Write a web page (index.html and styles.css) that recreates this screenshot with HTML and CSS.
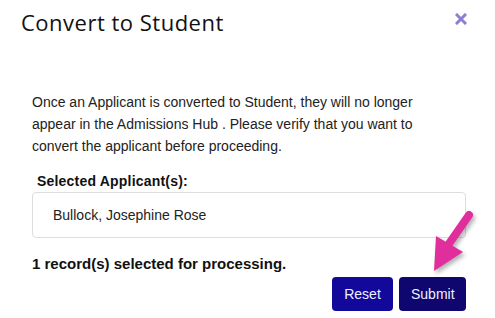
FILE: index.html
```html
<!DOCTYPE html>
<html lang="en">
<head>
    <meta charset="UTF-8">
    <title>Convert to Student</title>
    <link rel="stylesheet" href="styles.css">
</head>
<body>
    <div class="modal">
        <div class="modal-header">
            <h1 class="modal-title">Convert to Student</h1>
            <svg class="modal-close" width="12" height="12" viewBox="0 0 12 12">
                <path d="M2 2 L10 10 M10 2 L2 10" stroke="#8a7fd2" stroke-width="3" stroke-linecap="square"/>
            </svg>
        </div>

        <div class="modal-body">
            <p class="modal-text">Once an Applicant is converted to Student, they will no longer appear in the Admissions Hub . Please verify that you want to convert the applicant before proceeding.</p>

            <div class="field-label">Selected Applicant(s):</div>
            <div class="applicant-box">Bullock, Josephine Rose</div>

            <div class="record-count">1 record(s) selected for processing.</div>

            <div class="modal-footer">
                <button class="btn btn-reset">Reset</button>
                <button class="btn btn-submit">Submit</button>
            </div>
        </div>

        <!-- callout arrow pointing at submit -->
        <svg class="callout-arrow" width="60" height="80" viewBox="0 0 60 80">
            <line x1="48" y1="17" x2="25" y2="50" stroke="#e02f9c" stroke-width="8" stroke-linecap="round"/>
            <polygon points="13,73 15,38 42,54" fill="#e02f9c"/>
        </svg>
    </div>
</body>
</html>
```

FILE: styles.css
```css
body {
    margin: 0;
    background-color: #fff;
    font-family: "Liberation Sans", Arial, sans-serif;
    color: #222;
}

.modal {
    position: relative;
    width: 495px;
    height: 318px;
    overflow: hidden;
}

.modal-header {
    display: flex;
    justify-content: space-between;
    align-items: flex-start;
    padding: 6px 28px 0 21px;
}

.modal-title {
    margin: 0;
    font-family: "Open Sans", sans-serif;
    font-weight: 400;
    font-size: 22px;
    letter-spacing: 0.5px;
    line-height: 32px;
    color: #111;
}

.modal-close {
    margin-top: 7px;
}

.modal-body {
    padding: 53px 29px 0 32px;
}

.modal-text {
    margin: 0;
    max-width: 395px;
    font-size: 14px;
    line-height: 22px;
}

.field-label {
    margin-top: 13px;
    padding-left: 5px;
    font-size: 14px;
    font-weight: bold;
    letter-spacing: 0.2px;
    line-height: 22px;
    color: #111;
}

.applicant-box {
    height: 44px;
    padding-left: 20px;
    border: 1px solid #dddddd;
    border-radius: 4px;
    font-size: 14px;
    line-height: 44px;
    color: #222;
}

.record-count {
    margin-top: 16px;
    font-size: 15px;
    font-weight: bold;
    line-height: 20px;
    color: #111;
}

.modal-footer {
    display: flex;
    justify-content: flex-end;
    gap: 6px;
    margin-top: 3px;
}

.btn {
    height: 34px;
    padding: 0 12px;
    border: none;
    border-radius: 4px;
    font-family: "Liberation Sans", Arial, sans-serif;
    font-size: 14px;
    color: #f0f0ff;
    cursor: pointer;
}

.btn-reset {
    width: 61px;
    background-color: #12099b;
}

.btn-submit {
    width: 67px;
    background-color: #100670;
}

.callout-arrow {
    position: absolute;
    left: 421px;
    top: 198px;
    filter: drop-shadow(2px 3px 2px rgba(0, 0, 0, 0.3));
}
```
